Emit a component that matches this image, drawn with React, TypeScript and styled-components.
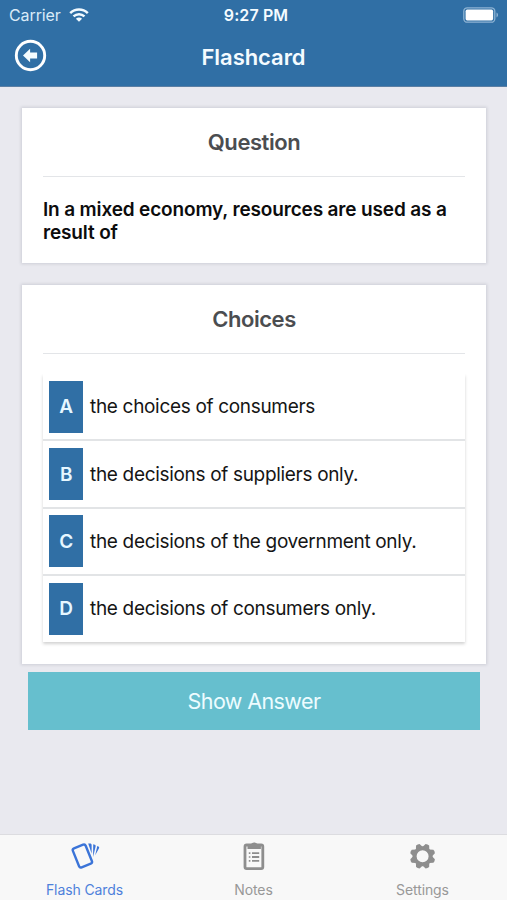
import React from 'react';
import styled, { createGlobalStyle } from 'styled-components';

const Global = createGlobalStyle`
  * { box-sizing: border-box; }
  body { margin: 0; background: #e9e9ef; font-family: Inter, "Liberation Sans", sans-serif; }
`;

const Screen = styled.div`
  width: 507px;
  height: 900px;
  display: flex;
  flex-direction: column;
  background: #e9e9ef;
  overflow: hidden;
`;

const Header = styled.header`
  height: 87px;
  flex: none;
  background: #306fa5;
  border-bottom: 1px solid #5b7fa4;
  color: #f4fbff;
`;

const StatusBar = styled.div`
  height: 29px;
  display: grid;
  grid-template-columns: 1fr auto 1fr;
  align-items: center;
  padding: 0 8px 0 9px;
`;

const Carrier = styled.div`
  display: flex;
  align-items: center;
  gap: 8px;
  font-size: 16px;
  letter-spacing: -0.1px;
  color: #d9ebf8;
`;

const Clock = styled.div`
  padding-left: 4px;
  font-size: 16px;
  font-weight: 600;
  letter-spacing: 0.1px;
`;

const BatterySlot = styled.div`
  display: flex;
  justify-content: flex-end;
`;

const NavBar = styled.div`
  height: 55px;
  display: grid;
  grid-template-columns: 60px 1fr 60px;
  align-items: center;
`;

const BackButton = styled.button`
  border: 0;
  padding: 0;
  margin: -2px 0 0 14px;
  width: 33px;
  height: 33px;
  background: none;
`;

const NavTitle = styled.h1`
  margin: 0;
  text-align: center;
  font-size: 22px;
  font-weight: 600;
  letter-spacing: -0.05px;
`;

const Content = styled.main`
  flex: 1;
  padding: 21px 21px 0 22px;
`;

const Card = styled.section<{ $height: number }>`
  height: ${(p) => p.$height}px;
  padding: 0 21px;
  background: #fff;
  box-shadow: 0 0 3px 1px rgba(40, 50, 70, 0.14);
  & + & { margin-top: 22px; }
`;

const CardTitle = styled.h2`
  margin: 0;
  height: 69px;
  border-bottom: 1px solid #e3e5e8;
  text-align: center;
  font-size: 22px;
  line-height: 68px;
  font-weight: 600;
  letter-spacing: -0.45px;
  color: #4b4d50;
`;

const Question = styled.p`
  margin: 21px 0 0;
  font-size: 19px;
  line-height: 23px;
  font-weight: 600;
  letter-spacing: -0.15px;
  color: #0c0c0d;
`;

const ChoiceList = styled.ul`
  margin: 20px 0 0;
  padding: 0;
  list-style: none;
  box-shadow: 0 2px 3px rgba(0, 0, 0, 0.18);
  clip-path: inset(0 -3px -6px -3px);
`;

const Choice = styled.li`
  height: 67.4px;
  display: flex;
  align-items: center;
  padding-left: 6px;
  border-bottom: 2px solid #e2e4e6;
  font-size: 19px;
  letter-spacing: -0.32px;
  color: #151515;
  &:last-child { height: 65.4px; border-bottom: 0; }
`;

const Letter = styled.span`
  width: 34px;
  height: 52px;
  margin-right: 7px;
  display: flex;
  align-items: center;
  justify-content: center;
  background: #306fa5;
  color: #e6f7ff;
  font-size: 19px;
  font-weight: 600;
`;

const ChoiceText = styled.span`
  white-space: nowrap;
`;

const AnswerButton = styled.button`
  display: block;
  margin: 8px 6px 0;
  width: 452px;
  height: 58px;
  border: 0;
  padding: 0;
  background: #66bfce;
  color: #edfcff;
  font: 400 21.5px Inter, sans-serif;
  letter-spacing: -0.6px;
`;

const TabBar = styled.nav`
  height: 66px;
  flex: none;
  display: grid;
  grid-template-columns: repeat(3, 1fr);
  background: #f8f8f8;
  border-top: 1px solid #dcdce0;
`;

const Tab = styled.div<{ $active?: boolean }>`
  display: flex;
  flex-direction: column;
  align-items: center;
  padding-top: 5px;
  color: ${(p) => (p.$active ? '#3b74d8' : '#8e8e8e')};
`;

const TabLabel = styled.span`
  margin-top: 9px;
  font-size: 14px;
  line-height: 18px;
  letter-spacing: -0.1px;
  opacity: 0.9;
`;

const WifiIcon = () => (
  <svg width="20" height="14" viewBox="0 0 20 14" fill="none" stroke="#f2faff" strokeWidth="2.5">
    <path d="M1.2 5.1C6.2.2 13.8.2 18.8 5.1" />
    <path d="M4.5 8.4c3.2-3 7.8-3 11 0" />
    <path d="M10 13.7 6.9 10.7c1.8-1.5 4.4-1.5 6.2 0Z" fill="#f2faff" stroke="none" />
  </svg>
);

const BatteryIcon = () => (
  <svg width="36" height="16" viewBox="0 0 36 16">
    <rect x=".8" y=".8" width="31" height="14.4" rx="3.5" fill="none" stroke="#8db3d3" strokeWidth="1.3" />
    <rect x="2.6" y="2.6" width="27.5" height="10.8" rx="1.6" fill="#fff" />
    <path d="M33.5 5.6c2 .8 2 4 0 4.8Z" fill="#8db3d3" />
  </svg>
);

const BackIcon = () => (
  <svg width="33" height="33" viewBox="0 0 33 33">
    <circle cx="16.5" cy="16.5" r="14.2" fill="none" stroke="#fff" strokeWidth="2.9" />
    <path d="M9 16.5 16.1 9.7v3.8h7v6h-7v3.8Z" fill="#f4fcff" />
  </svg>
);

const CardsIcon = () => (
  <svg width="32" height="32" viewBox="0 0 32 32">
    <rect x="6.5" y="5.7" width="13.8" height="20.5" rx="2" transform="rotate(-22 13.4 16)" fill="none" stroke="currentColor" strokeWidth="2.4" />
    <path d="M19.2 3.6h2c.8 0 1.4.6 1.4 1.4v8.4Z" fill="currentColor" />
    <path d="m24.2 4.2 1.6.5c.8.3 1 1.1.8 1.8l-2.5 10.5Z" fill="currentColor" />
    <path d="m28.3 6 1.1.4c.7.4 1 1.2.6 1.9l-3.8 7Z" fill="currentColor" />
  </svg>
);

const NotesIcon = () => (
  <svg width="32" height="32" viewBox="0 0 32 32">
    <rect x="7" y="5" width="17.8" height="23.6" rx="1.6" fill="none" stroke="currentColor" strokeWidth="2.8" />
    <path d="M9.5 5h3.2c.4-1.6 1.7-2.6 3.5-2.6s3.1 1 3.5 2.6h3.2v4.1H9.5Z" fill="currentColor" />
    <path d="M14 13.1h7.2M14 17h7.2M14 20.9h7.2" stroke="currentColor" strokeWidth="1.9" />
    <path d="M10.8 13.1h1.6M10.8 17h1.6M10.8 20.9h1.6" stroke="currentColor" strokeWidth="1.7" />
  </svg>
);

const GearIcon = () => (
  <svg width="32" height="32" viewBox="0 0 32 32">
    <g transform="translate(15.6 16.3)">
      <circle r="8" fill="none" stroke="currentColor" strokeWidth="4" />
      {[22.5, 67.5, 112.5, 157.5, 202.5, 247.5, 292.5, 337.5].map((angle) => (
        <path key={angle} transform={`rotate(${angle})`} d="M-3.6-8.8-1.9-12.5Q0-13.2 1.9-12.5L3.6-8.8Z" fill="currentColor" />
      ))}
    </g>
  </svg>
);

const choices = [
  ['A', 'the choices of consumers'],
  ['B', 'the decisions of suppliers only.'],
  ['C', 'the decisions of the government only.'],
  ['D', 'the decisions of consumers only.'],
];

export default function App() {
  return (
    <>
      <Global />
      <Screen>
        <Header>
          <StatusBar>
            <Carrier>Carrier <WifiIcon /></Carrier>
            <Clock>9:27 PM</Clock>
            <BatterySlot><BatteryIcon /></BatterySlot>
          </StatusBar>
          <NavBar>
            <BackButton aria-label="Back"><BackIcon /></BackButton>
            <NavTitle>Flashcard</NavTitle>
          </NavBar>
        </Header>
        <Content>
          <Card $height={155}>
            <CardTitle>Question</CardTitle>
            <Question>In a mixed economy, resources are used as a result of</Question>
          </Card>
          <Card $height={379}>
            <CardTitle>Choices</CardTitle>
            <ChoiceList>
              {choices.map(([letter, text]) => (
                <Choice key={letter}>
                  <Letter>{letter}</Letter>
                  <ChoiceText>{text}</ChoiceText>
                </Choice>
              ))}
            </ChoiceList>
          </Card>
          <AnswerButton>Show Answer</AnswerButton>
        </Content>
        <TabBar>
          <Tab $active><CardsIcon /><TabLabel>Flash Cards</TabLabel></Tab>
          <Tab><NotesIcon /><TabLabel>Notes</TabLabel></Tab>
          <Tab><GearIcon /><TabLabel>Settings</TabLabel></Tab>
        </TabBar>
      </Screen>
    </>
  );
}
